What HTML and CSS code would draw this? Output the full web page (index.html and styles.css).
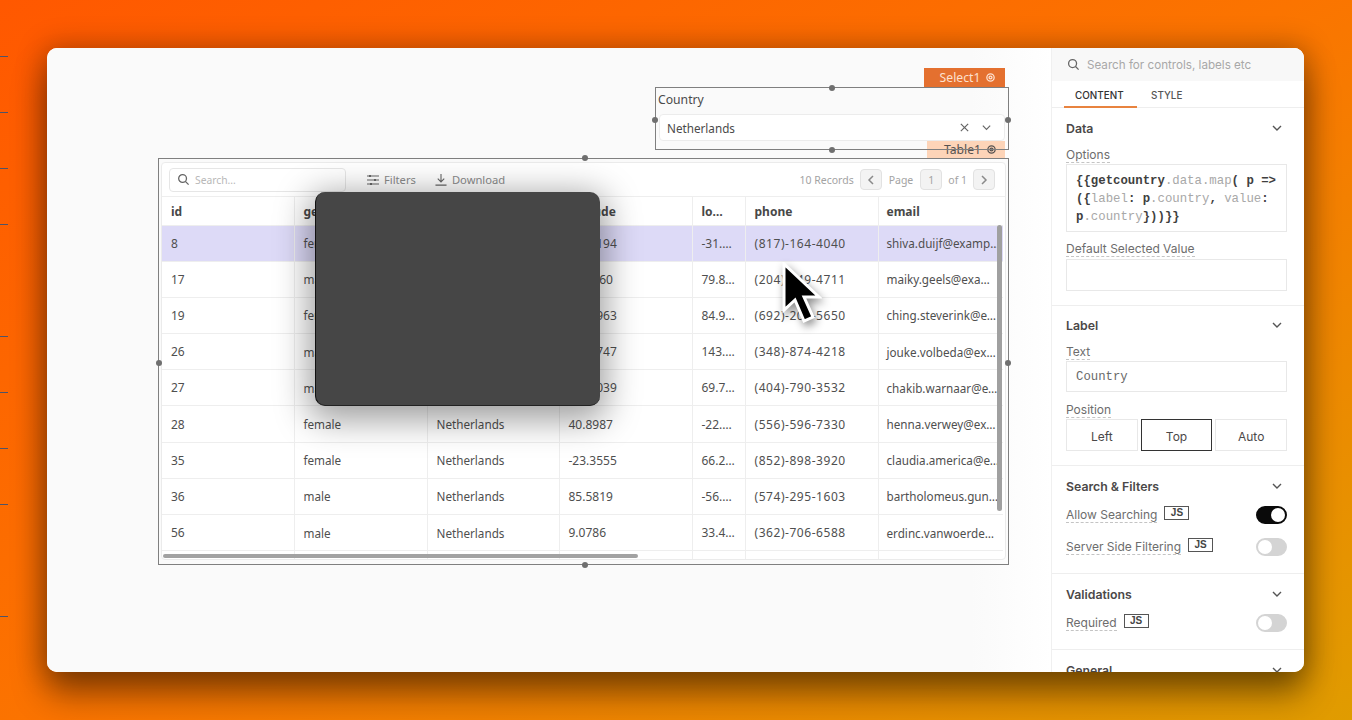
FILE: index.html
```html
<!DOCTYPE html>
<html lang="en">
<head>
<meta charset="utf-8">
<title>Table and select editor</title>
<link rel="stylesheet" href="styles.css">
</head>
<body>
<div class="ticks"><i></i><i></i><i></i><i></i><i class="off"></i><i></i><i></i><i></i><i></i><i class="off"></i><i></i></div>
<main class="window">
  <section class="canvas">
    <div class="tag tag-select">Select1 <svg viewBox="0 0 12 12"><circle cx="6" cy="6" r="4" /><circle cx="6" cy="6" r="1.6" /></svg></div>
    <div class="tag tag-table">Table1 <svg viewBox="0 0 12 12"><circle cx="6" cy="6" r="4" /><circle cx="6" cy="6" r="1.6" /></svg></div>
    <div class="widget widget-select">
      <div class="sel-label">Country</div>
      <div class="sel-box"><span>Netherlands</span>
        <svg class="sel-x" viewBox="0 0 12 12"><path d="M2 2l8 8M10 2l-8 8"/></svg>
        <svg class="sel-chev" viewBox="0 0 12 12"><path d="M2 4l4 4 4-4"/></svg>
      </div>
    </div>
    <div class="widget widget-table">
      <div class="card">
        <div class="toolbar">
          <div class="tsearch"><svg viewBox="0 0 14 14"><circle cx="6" cy="6" r="4.2"/><path d="M9 9l3.5 3.5"/></svg><span>Search...</span></div>
          <div class="tbtn tbtn-filter"><svg viewBox="0 0 12 12"><path d="M0 2h12M0 6h12M0 10h12"/><path class="knob" d="M3 1v2M8 5v2M4 9v2"/></svg>Filters</div>
          <div class="tbtn"><svg viewBox="0 0 13 13"><path d="M6.500 0v8M3 5l3.500 3.500L10 5M0.500 12h12"/></svg>Download</div>
          <div class="pager">
            <span class="rec">10 Records</span>
            <span class="pg"><svg viewBox="0 0 8 10"><path d="M6 1L2 5l4 4"/></svg></span>
            <span class="rec pg-word">Page</span>
            <span class="pg pg-num">1</span>
            <span class="rec">of 1</span>
            <span class="pg"><svg viewBox="0 0 8 10"><path d="M2 1l4 4-4 4"/></svg></span>
          </div>
        </div>
        <table class="grid">
          <colgroup><col class="c1"><col class="c2"><col class="c3"><col class="c4"><col class="c5"><col class="c6"><col class="c7"></colgroup>
          <thead><tr><th>id</th><th>gender</th><th>country</th><th>latitude</th><th>longitude</th><th>phone</th><th>email</th></tr></thead>
          <tbody>
            <tr class="active"><td>8</td><td>female</td><td>Netherlands</td><td>-67.2194</td><td>-31.2091</td><td>(817)-164-4040</td><td>shiva.duijf@example.com</td></tr>
            <tr><td>17</td><td>male</td><td>Netherlands</td><td>52.1460</td><td>79.8122</td><td>(204)-849-4711</td><td>maiky.geels@example.com</td></tr>
            <tr><td>19</td><td>female</td><td>Netherlands</td><td>-45.8963</td><td>84.9120</td><td>(692)-207-5650</td><td>ching.steverink@example.com</td></tr>
            <tr><td>26</td><td>male</td><td>Netherlands</td><td>-71.4747</td><td>143.2210</td><td>(348)-874-4218</td><td>jouke.volbeda@example.com</td></tr>
            <tr><td>27</td><td>male</td><td>Netherlands</td><td>-28.6039</td><td>69.7301</td><td>(404)-790-3532</td><td>chakib.warnaar@example.com</td></tr>
            <tr><td>28</td><td>female</td><td>Netherlands</td><td>40.8987</td><td>-22.5410</td><td>(556)-596-7330</td><td>henna.verwey@example.com</td></tr>
            <tr><td>35</td><td>female</td><td>Netherlands</td><td>-23.3555</td><td>66.2874</td><td>(852)-898-3920</td><td>claudia.america@example.com</td></tr>
            <tr><td>36</td><td>male</td><td>Netherlands</td><td>85.5819</td><td>-56.1437</td><td>(574)-295-1603</td><td>bartholomeus.gunter@example.com</td></tr>
            <tr><td>56</td><td>male</td><td>Netherlands</td><td>9.0786</td><td>33.4621</td><td>(362)-706-6588</td><td>erdinc.vanwoerden@example.com</td></tr>
            <tr class="stub"><td></td><td></td><td></td><td></td><td></td><td></td><td></td></tr>
          </tbody>
        </table>
        <div class="vbar"></div>
        <div class="hbar"></div>
      </div>
    </div>
    <b class="dot d1"></b><b class="dot d2"></b><b class="dot d3"></b><b class="dot d4"></b>
    <b class="dot d5"></b><b class="dot d6"></b><b class="dot d7"></b><b class="dot d8"></b>
    <div class="overlay"></div>
    <svg class="cursor" viewBox="0 0 40 62"><path d="M2 2v46l11-10 9 21 9-4-9-20h15z"/></svg>
  </section>
  <aside class="panel">
    <div class="psearch"><svg viewBox="0 0 14 14"><circle cx="6" cy="6" r="4.300"/><path d="M9.200 9.200l3.300 3.300"/></svg><span>Search for controls, labels etc</span></div>
    <div class="tabs"><span class="tab on">CONTENT</span><span class="tab">STYLE</span></div>
    <div class="sec sec-data">
      <div class="sec-h"><span>Data</span><svg viewBox="0 0 12 12"><path d="M2 4l4 4 4-4"/></svg></div>
      <label class="lab">Options</label>
      <div class="code"><b>{{getcountry</b>.data.map<b>( p =&gt;</b><br><b>({</b>label<b>: p</b>.country<b>,</b> value<b>:</b><br><b>p</b>.country<b>}))}}</b></div>
      <label class="lab lab-2">Default Selected Value</label>
      <div class="inp"></div>
    </div>
    <div class="sec sec-label">
      <div class="sec-h"><span>Label</span><svg viewBox="0 0 12 12"><path d="M2 4l4 4 4-4"/></svg></div>
      <label class="lab">Text</label>
      <div class="inp inp-text">Country</div>
      <label class="lab lab-3">Position</label>
      <div class="seg"><span>Left</span><span class="sel">Top</span><span>Auto</span></div>
    </div>
    <div class="sec sec-search">
      <div class="sec-h"><span>Search &amp; Filters</span><svg viewBox="0 0 12 12"><path d="M2 4l4 4 4-4"/></svg></div>
      <div class="prop"><label class="lab">Allow Searching</label><em class="js">JS</em><i class="tog on"></i></div>
      <div class="prop prop-2"><label class="lab">Server Side Filtering</label><em class="js">JS</em><i class="tog"></i></div>
    </div>
    <div class="sec sec-valid">
      <div class="sec-h"><span>Validations</span><svg viewBox="0 0 12 12"><path d="M2 4l4 4 4-4"/></svg></div>
      <div class="prop"><label class="lab">Required</label><em class="js">JS</em><i class="tog"></i></div>
    </div>
    <div class="sec sec-gen">
      <div class="sec-h"><span>General</span><svg viewBox="0 0 12 12"><path d="M2 4l4 4 4-4"/></svg></div>
    </div>
  </aside>
</main>
</body>
</html>
```
FILE: styles.css
```css
* { box-sizing: border-box; }
html, body { height: 100%; }
body {
  margin: 0;
  height: 720px;
  overflow: hidden;
  padding: 48px 48px 48px 47px;
  background: linear-gradient(150deg, #ff5800 0%, #fb7400 50%, #e09c00 100%);
  font-family: "Inter", "Liberation Sans", sans-serif;
  color: #4b4848;
  position: relative;
}
.ticks { position: absolute; left: 0; top: 56px; display: flex; flex-direction: column; gap: 55px; }
.ticks i { display: block; width: 8px; height: 1px; background: #4f5468; }
.ticks i.off { background: transparent; }

.window {
  position: relative;
  width: 1257px;
  height: 624px;
  display: flex;
  border-radius: 10px;
  overflow: hidden;
  background: #fff;
}
body::before {
  content: "";
  position: absolute;
  left: 47px; top: 48px;
  width: 1257px; height: 624px;
  border-radius: 10px;
  box-shadow: 0 22px 34px 0 rgba(0, 0, 0, .42), 0 0 28px 4px rgba(0, 0, 0, .24);
}

/* canvas: widgets are placed freely, as in the editor */
.canvas { position: relative; flex: 1; background: linear-gradient(90deg, #fafafa 92%, #fff 100%); }
.widget { position: absolute; border: 1px solid #7f7f7f; }
.widget-select { left: 608px; top: 39px; width: 354px; height: 63px; padding: 2px 3px 3px 2px; z-index: 2; }
.sel-label { font: 12.200px/20px "Noto Sans", sans-serif; color: #4a4a4a; height: 24px; }
.sel-box {
  height: 27px; margin-left: 1px; border: 1px solid #ececec; border-radius: 4px; background: #fff;
  display: flex; align-items: center; padding: 0 12px 0 7px;
  font: 11.700px "Noto Sans", sans-serif; color: #4a4a4a;
}
.sel-box span { flex: 1; }
.sel-box svg { fill: none; stroke: #666; stroke-width: 1.300; }
.sel-x { width: 11px; height: 11px; margin-right: 11px; }
.sel-chev { width: 11px; height: 11px; }

.tag { position: absolute; font: 12.200px/18px "Noto Sans", sans-serif; display: flex; align-items: center; justify-content: center; gap: 5px; }
.tag svg { width: 11px; height: 11px; fill: none; stroke: currentColor; stroke-width: 1.400; }
.tag-select { left: 877px; top: 20px; width: 81px; height: 19px; padding-left: 7px; background: #e4702f; color: #fde0cf; }
.tag-table { left: 880px; top: 93px; width: 78px; height: 17px; padding-left: 9px; background: #fdd4b8; color: #565250; }

.widget-table { left: 111px; top: 110px; width: 851px; height: 407px; padding: 3px 2px 4px 2px; }
.card { position: relative; height: 100%; background: #fff; border: 1px solid #ebebeb; border-radius: 4px; overflow: hidden; font-family: "Noto Sans", sans-serif; color: #4f4f4f; }
.toolbar { height: 34px; display: flex; align-items: center; padding: 0 10px 0 7px; font-size: 12px; border-bottom: 1px solid #eee; }
.tsearch { width: 177px; height: 24px; border: 1px solid #e6e6e6; border-radius: 4px; display: flex; align-items: center; gap: 5px; padding-left: 7px; font-size: 10.300px; color: #b8b8b8; margin-right: 21px; }
.tsearch svg { width: 13px; height: 13px; fill: none; stroke: #666; stroke-width: 1.400; }
.tbtn { display: flex; align-items: center; gap: 5px; color: #8a8a8a; margin-right: 19px; font-size: 11.200px; }
.tbtn svg { width: 12px; height: 12px; fill: none; stroke: #666; stroke-width: 1.200; }
.tbtn .knob { stroke-width: 2; }
.pager { margin-left: auto; display: flex; align-items: center; gap: 6px; font-size: 10.500px; color: #a3a3a3; }
.pg { width: 22px; height: 21px; border: 1px solid #e2e2e2; border-radius: 4px; background: #f3f3f3; display: flex; align-items: center; justify-content: center; }
.pg svg { width: 8px; height: 10px; fill: none; stroke: #8a8a8a; stroke-width: 1.500; }
.pg-word { margin: 0 1px; }

.grid { width: 841px; table-layout: fixed; border-collapse: collapse; font-size: 11.700px; }
.c1 { width: 132px; } .c2 { width: 133px; } .c3 { width: 132px; } .c4 { width: 133px; }
.c5 { width: 53px; } .c6 { width: 133px; } .c7 { width: 125px; }
.grid th, .grid td { padding: 0 5px 0 9px; border-right: 1px solid #eeeeee; text-align: left; overflow: hidden; white-space: nowrap; text-overflow: ellipsis; }
.grid th { height: 28px; padding-top: 2px; font-weight: 700; font-size: 12px; color: #484848; border-bottom: 1px solid #eee; }
.grid td { height: 36.200px; border-bottom: 1px solid #eee; }
.grid th:nth-child(5) { padding-right: 14px; }
.grid td:nth-child(5) { padding-right: 8px; font-size: 12px; }
.grid td:nth-child(1), .grid td:nth-child(4) { font-size: 12px; }
.grid td:nth-child(6) { letter-spacing: .55px; font-size: 12px; }
.grid td:nth-child(7) { padding-right: 3px; padding-left: 8px; font-size: 11.700px; }
.grid th:last-child { padding-left: 8px; }
.grid th:last-child, .grid td:last-child { border-right: 0; }
.active td { background: #dddaf7; }
.stub td { height: 12px; }
.vbar { position: absolute; left: 835px; top: 62px; width: 5px; height: 286px; border-radius: 3px; background: #a0a0a0; }
.hbar { position: absolute; left: 1px; top: 391px; width: 475px; height: 4px; border-radius: 2px; background: #a2a2a2; }

.dot { position: absolute; width: 6px; height: 6px; border-radius: 50%; background: #6f6f6f; z-index: 3; }
.d1 { left: 782px; top: 37px; } .d2 { left: 605px; top: 69px; } .d3 { left: 958px; top: 69px; } .d4 { left: 782px; top: 99px; }
.d5 { left: 535px; top: 107px; } .d6 { left: 109px; top: 312px; } .d7 { left: 958px; top: 312px; } .d8 { left: 535px; top: 514px; }

.overlay {
  position: absolute; left: 268px; top: 144px; width: 285px; height: 214px; z-index: 4;
  border-radius: 10px; background: #464646; border-left: 1px solid #111; border-bottom: 1px solid #222;
  box-shadow: 0 8px 34px 6px rgba(0, 0, 0, .38);
}
.cursor {
  position: absolute; left: 735px; top: 214px; width: 40px; height: 62px; z-index: 5;
  fill: #000; stroke: #fff; stroke-width: 3; filter: drop-shadow(2px 4px 4px rgba(0, 0, 0, .45));
}

/* property panel */
.panel { width: 253px; border-left: 1px solid #f0f0f0; background: #fff; overflow: hidden; font-size: 12px; flex: none; }
.psearch { height: 33px; background: #f8f8f8; display: flex; align-items: center; gap: 7px; padding-left: 15px; color: #a8a8a8; font-size: 11.650px; }
.psearch svg { width: 13px; height: 13px; fill: none; stroke: #666; stroke-width: 1.400; }
.tabs { height: 27px; display: flex; border-bottom: 1px solid #eee; padding-left: 12px; font-size: 9.900px; }
.tab { padding: 1px 11px 0; line-height: 27px; height: 27px; color: #555; font-weight: 500; margin-right: 3px; }
.tab.on { color: #333; border-bottom: 2px solid #e8833f; width: 73px; margin-right: 3px; }
.sec { padding: 0 17px 0 14px; border-bottom: 1px solid #eee; }
.sec-h { height: 20px; display: flex; align-items: center; justify-content: space-between; font-weight: 600; font-size: 12.300px; color: #4b4848; padding-right: 4px; }
.sec-h svg { width: 12px; height: 12px; fill: none; stroke: #555; stroke-width: 1.400; }
.lab { display: inline-block; line-height: 14px; color: #6d6d6d; border-bottom: 1px dashed #c4c4c4; height: 15px; }
.sec-data { padding-top: 10px; height: 198px; }
.sec-data > .lab { margin-top: 10px; display: table; }
.code { margin-top: 1px; height: 68px; border: 1px solid #e8e8e8; padding: 7px 9px; font: 12.350px/18px "Liberation Mono", monospace; color: #a8a8a8; white-space: nowrap; }
.code b { color: #3f3f3f; font-weight: 700; }
.sec-data > .lab-2 { margin-top: 10px; }
.inp { height: 32px; border: 1px solid #e8e8e8; margin-top: 2px; }
.sec-label { padding-top: 9px; height: 160px; }
.sec-label > .lab { display: table; margin-top: 10px; }
.inp-text { height: 31px; margin-top: 1px; padding-left: 9px; font: 12.300px/31px "Liberation Mono", monospace; color: #6a6a6a; }
.sec-label > .lab-3 { margin-top: 11px; }
.seg { display: flex; gap: 3px; margin-top: 1px; }
.seg span { flex: 1; height: 32px; padding-top: 2px; border: 1px solid #e8e8e8; display: flex; align-items: center; justify-content: center; color: #4b4848; }
.seg .sel { border: 1px solid #333; }
.sec-search { padding-top: 10px; height: 108px; }
.prop { display: flex; align-items: center; height: 18px; margin-top: 10px; }
.prop-2 { margin-top: 14px; }
.js { font: 600 10px/12px "Liberation Sans", sans-serif; border: 1px solid #555; color: #444; width: 25px; height: 14px; text-align: center; margin: -4px 0 0 7px; }
.tog { margin-left: auto; width: 31px; height: 18px; border-radius: 9px; background: #d4d4d4; border: 2px solid #d4d4d4; display: flex; }
.tog::before { content: ""; width: 14px; height: 14px; border-radius: 50%; background: #fff; }
.tog.on { background: #0a0a0a; border-color: #0a0a0a; justify-content: flex-end; }
.sec-valid { padding-top: 10px; height: 76px; }
.sec-gen { padding-top: 10px; border-bottom: 0; }
```
